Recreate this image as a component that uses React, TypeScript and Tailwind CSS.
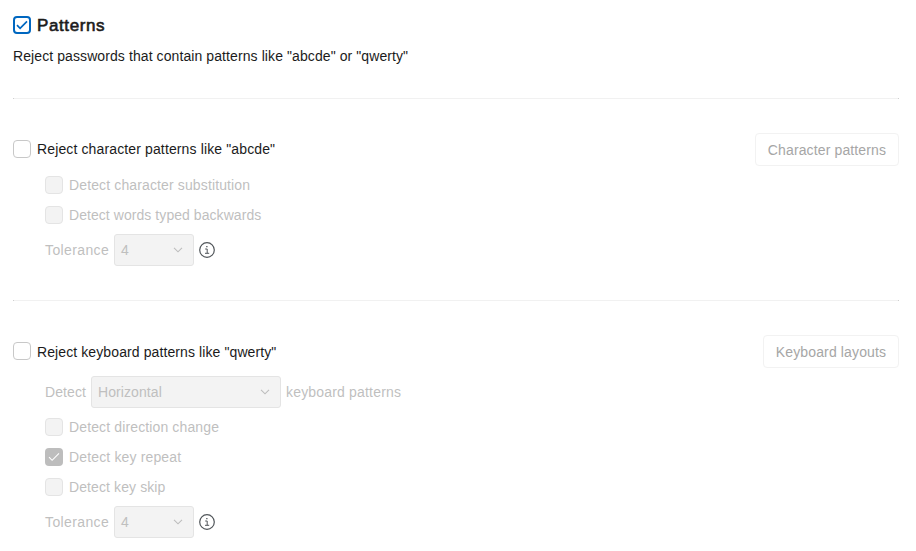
import type { ReactNode } from "react";

type BoxKind = "active" | "empty" | "disabled" | "disabledChecked";

function Box({ kind, className = "" }: { kind: BoxKind; className?: string }) {
  const styles = {
    active: "border-2 border-[#0067c0] bg-white text-[#0067c0]",
    empty: "border border-[#c8c8c8] bg-white",
    disabled: "border border-[#e4e4e4] bg-[#f3f3f3]",
    disabledChecked: "bg-[#bdbdbd] text-white",
  }[kind];
  const checked = kind === "active" || kind === "disabledChecked";
  return (
    <span className={`flex size-[18px] shrink-0 items-center justify-center rounded-[4px] ${styles} ${className}`}>
      {checked && (
        <svg width="12" height="10" viewBox="0 0 12 10" className="shrink-0" fill="none" stroke="currentColor">
          <path d="M1 5.2 4.1 8.3 11 1.4" strokeWidth={kind === "active" ? 1.7 : 1.1} />
        </svg>
      )}
    </span>
  );
}

function Option({
  kind,
  children,
  className = "",
  boxClassName = "",
}: {
  kind: BoxKind;
  children: ReactNode;
  className?: string;
  boxClassName?: string;
}) {
  return (
    <label className={`flex h-[18px] items-center gap-1.5 whitespace-nowrap leading-[18px] ${className}`}>
      <Box kind={kind} className={boxClassName} />
      <span>{children}</span>
    </label>
  );
}

function Select({ value, className }: { value: string; className: string }) {
  return (
    <div className={`flex h-8 items-center justify-between rounded-[3px] border border-[#e4e4e4] bg-[#f3f3f3] pr-[10px] pl-1.5 tracking-[0.08px] ${className}`}>
      <span>{value}</span>
      <svg width="10" height="6" viewBox="0 0 10 6" fill="none" stroke="#bdbdbd" strokeWidth="1.1">
        <path d="M1 .8 5 4.8 9 .8" />
      </svg>
    </div>
  );
}

function Info() {
  return (
    <svg width="16" height="16" viewBox="0 0 16 16" fill="none" stroke="#51565a" className="ml-[5px]">
      <circle cx="8" cy="8" r="7.3" strokeWidth="1.2" />
      <path d="M6.2 7h2v4.2M6 11.3h4.2" strokeWidth="1" />
      <path d="M7.2 4.6h1.3" strokeWidth="1.3" />
    </svg>
  );
}

function Tolerance() {
  return (
    <div className="flex h-8 items-center">
      <span className="w-[69px] tracking-[0.38px]">Tolerance</span>
      <Select value="4" className="w-20" />
      <Info />
    </div>
  );
}

function Action({ children, className }: { children: ReactNode; className: string }) {
  return (
    <button className={`h-[33px] rounded-[4px] border border-[#f2f2f2] pt-0.5 tracking-[0.13px] text-[#a6a6a6] ${className}`}>
      {children}
    </button>
  );
}

function Divider({ className }: { className: string }) {
  return <hr className={`h-px border-x border-t-0 border-x-[#cfcfcf] bg-[#f1f1f1] ${className}`} />;
}

export default function App() {
  return (
    <main className="h-[551px] w-[916px] overflow-hidden bg-white pt-4 pr-[17px] pl-[13px] font-['Liberation_Sans',Arial,sans-serif] text-[14px] text-[#1b1b1b]">
      <h2 className="flex h-[18px] items-center gap-1.5 text-[17px] leading-[18px] tracking-[0.6px]">
        <Box kind="active" />
        <span className="pt-0.5 [-webkit-text-stroke:0.6px_#1b1b1b]">Patterns</span>
      </h2>
      <p className="mt-[13px] h-[18px] leading-[18px] tracking-[0.09px]">
        Reject passwords that contain patterns like "abcde" or "qwerty"
      </p>
      <Divider className="mt-[33px]" />

      <section className="pt-[34px]">
        <div className="flex h-[33px] items-center justify-between">
          <Option kind="empty" className="mb-0.5 tracking-[0.13px]">Reject character patterns like "abcde"</Option>
          <Action className="w-36">Character patterns</Action>
        </div>
        <div className="pt-[10px] pl-8 text-[#bfbfbf]">
          <Option kind="disabled" className="tracking-[0.13px]">Detect character substitution</Option>
          <Option kind="disabled" className="mt-3 tracking-[0.06px]">Detect words typed backwards</Option>
          <div className="pt-[10px]">
            <Tolerance />
          </div>
        </div>
      </section>
      <Divider className="mt-[34px]" />

      <section className="pt-[34px]">
        <div className="flex h-[33px] items-center justify-between">
          <Option kind="empty" className="tracking-[0.1px]" boxClassName="mb-0.5">Reject keyboard patterns like "qwerty"</Option>
          <Action className="w-[136px]">Keyboard layouts</Action>
        </div>
        <div className="pt-2 pl-8 text-[#bfbfbf]">
          <div className="flex h-8 items-center">
            <span className="w-[46px] tracking-[0.1px]">Detect</span>
            <Select value="Horizontal" className="w-[190px]" />
            <span className="ml-[5px] tracking-[0.18px]">keyboard patterns</span>
          </div>
          <Option kind="disabled" className="mt-[10px] tracking-[0.13px]">Detect direction change</Option>
          <Option kind="disabledChecked" className="mt-3 tracking-[0.15px]">Detect key repeat</Option>
          <Option kind="disabled" className="mt-3 tracking-[0.1px]">Detect key skip</Option>
          <div className="pt-[10px]">
            <Tolerance />
          </div>
        </div>
      </section>
    </main>
  );
}
